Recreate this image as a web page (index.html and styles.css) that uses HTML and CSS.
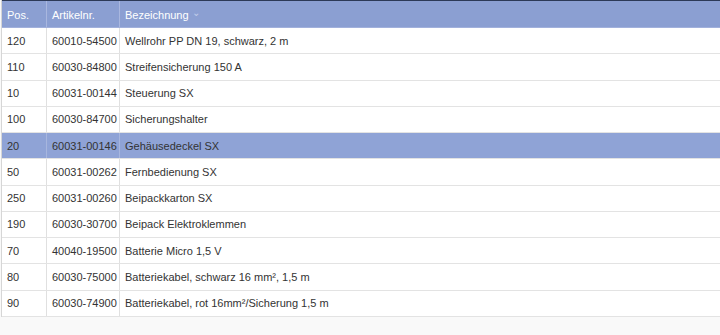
FILE: index.html
```html
<!DOCTYPE html>
<html>
<head>
<meta charset="utf-8">
<link rel="stylesheet" href="styles.css">
</head>
<body>
<div class="grid">
  <div class="row head">
    <div class="c pos">Pos.</div>
    <div class="c art">Artikelnr.</div>
    <div class="c bez">Bezeichnung <span class="sort">&#8964;</span></div>
  </div>
  <div class="row"><div class="c pos">120</div><div class="c art">60010-54500</div><div class="c bez">Wellrohr PP DN 19, schwarz, 2 m</div></div>
  <div class="row"><div class="c pos">110</div><div class="c art">60030-84800</div><div class="c bez">Streifensicherung 150 A</div></div>
  <div class="row"><div class="c pos">10</div><div class="c art">60031-00144</div><div class="c bez">Steuerung SX</div></div>
  <div class="row"><div class="c pos">100</div><div class="c art">60030-84700</div><div class="c bez">Sicherungshalter</div></div>
  <div class="row sel"><div class="c pos">20</div><div class="c art">60031-00146</div><div class="c bez">Gehäusedeckel SX</div></div>
  <div class="row"><div class="c pos">50</div><div class="c art">60031-00262</div><div class="c bez">Fernbedienung SX</div></div>
  <div class="row"><div class="c pos">250</div><div class="c art">60031-00260</div><div class="c bez">Beipackkarton SX</div></div>
  <div class="row"><div class="c pos">190</div><div class="c art">60030-30700</div><div class="c bez">Beipack Elektroklemmen</div></div>
  <div class="row"><div class="c pos">70</div><div class="c art">40040-19500</div><div class="c bez">Batterie Micro 1,5 V</div></div>
  <div class="row"><div class="c pos">80</div><div class="c art">60030-75000</div><div class="c bez">Batteriekabel, schwarz 16 mm², 1,5 m</div></div>
  <div class="row"><div class="c pos">90</div><div class="c art">60030-74900</div><div class="c bez">Batteriekabel, rot 16mm²/Sicherung 1,5 m</div></div>
</div>
</body>
</html>
```
FILE: styles.css
```css
html, body {
  margin: 0;
  padding: 0;
  background: #f9f9f9;
}
body {
  font-family: "Liberation Sans", Arial, sans-serif;
  font-size: 11px;
  color: #333;
  width: 720px;
  height: 335px;
  overflow: hidden;
}
.grid {
  border-left: 1px solid #d6d6d6;
  margin-left: 1px;
  background: #fff;
}
.row {
  display: flex;
  height: 26.25px;
  box-sizing: border-box;
  border-bottom: 1px solid #e3e3e3;
}
.row.head {
  height: 28px;
  background: #8b9fd2;
  color: #fff;
  border-top: 1px solid #2c3957;
  border-bottom: 1px solid #a2b1dc;
}
.row.sel {
  background: #8fa3d6;
}
.c {
  display: flex;
  align-items: center;
  padding-left: 5px;
  box-sizing: border-box;
  border-right: 1px solid #e0e0e0;
  white-space: nowrap;
}
.head .c {
  border-right-color: #a9b7df;
  padding-top: 1px;
}
.sel .c {
  border-right-color: #a7b6de;
}
.pos { width: 45px; }
.art { width: 73px; }
.bez { flex: 1; border-right: none; }
.sort {
  font-size: 10px;
  color: #c3cdea;
  margin-left: 3px;
  margin-top: -4px;
}
```
